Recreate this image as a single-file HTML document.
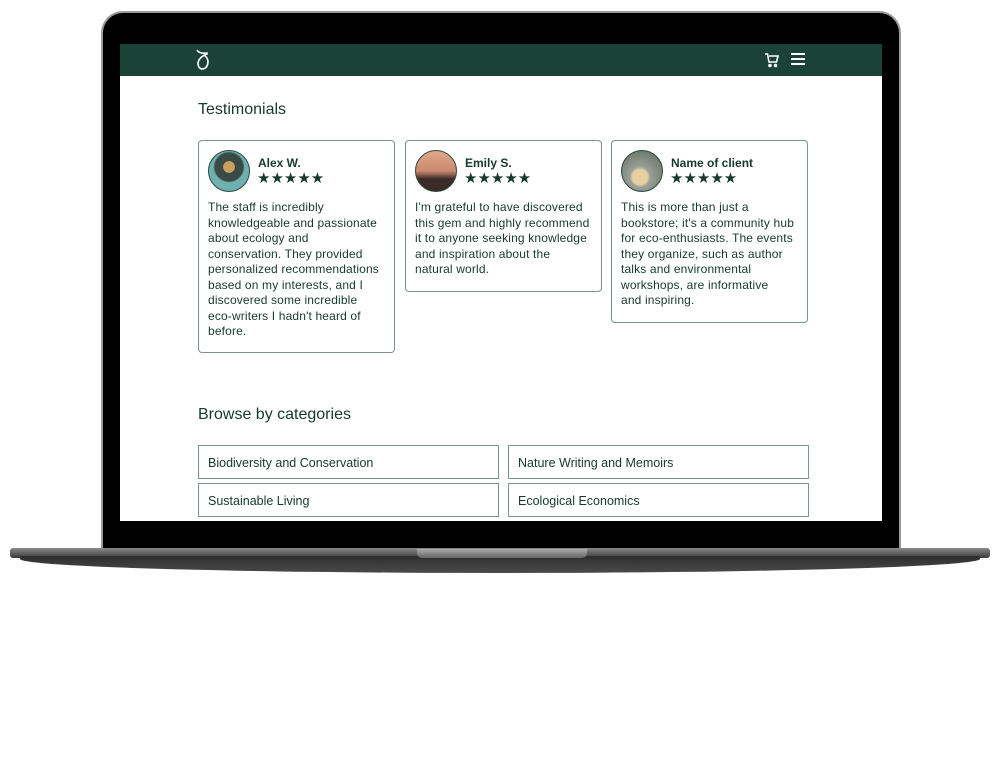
<!DOCTYPE html>
<html><head><meta charset="utf-8"><style>
*{margin:0;padding:0;box-sizing:border-box}
body{width:1000px;height:778px;background:#fff;position:relative;overflow:hidden;font-family:"Liberation Sans",sans-serif;color:#17392c}
.frame{position:absolute;left:101px;top:11px;width:800px;height:545px;background:#000;border-radius:22px 22px 0 0;border:2px solid #9a9a9a;border-bottom:none}
.screen{position:absolute;left:120px;top:44px;width:762px;height:477px;background:#fff;overflow:hidden}
.nav{position:absolute;left:0;top:0;width:762px;height:32px;background:#1b4237}
.base{position:absolute;left:10px;top:548px;width:980px;height:10px;background:linear-gradient(#8a8a8a,#3a3a3a);border-radius:3px}
.base2{position:absolute;left:20px;top:556px;width:960px;height:17px;background:linear-gradient(#2e2e2e,#4a4a4a);border-radius:0 0 60% 60%/0 0 100% 100%}
.notch{position:absolute;left:417px;top:549px;width:170px;height:9px;background:linear-gradient(#aaa,#666);border-radius:0 0 5px 5px}
h2{position:absolute;font-weight:normal;font-size:16px;color:#17392c}
.card{position:absolute;top:96px;width:197px;border:1px solid #7a948a;border-radius:4px;padding:9px 9px 10px 9px}
.av{position:absolute;left:9px;top:9px;width:42px;height:42px;border-radius:50%;border:1px solid #2a4a3e}
.nm{position:absolute;left:59px;top:15px;font-weight:bold;font-size:12px}
.st{position:absolute;left:58px;top:28px;font-size:15px;letter-spacing:0;color:#17392c}
.tx{margin-top:50px;font-size:12px;line-height:15.5px;letter-spacing:.15px;white-space:nowrap}
.cat{position:absolute;width:301px;height:34px;border:1px solid #7a948a;font-size:12.5px;padding:10px 9px}
</style></head><body>
<div class="frame"></div>
<div class="base"></div><div class="base2"></div><div class="notch"></div>
<div class="screen">
 <div class="nav">
  <svg style="position:absolute;left:74px;top:4px" width="18" height="24" viewBox="0 0 18 24" fill="none" stroke="#fff" stroke-width="1.6"><path d="M3 2 Q5 6 13 5 L13 6 Q5 9 4 15 Q4 21 9 21 Q14 20 14 13 Q13 8 9 7"/></svg>
  <svg style="position:absolute;left:644px;top:8px" width="16" height="16" viewBox="0 0 16 16" fill="none" stroke="#fff" stroke-width="1.6"><path d="M1 2h2.5l1.5 8h7.5l1.5-6H5"/><circle cx="6" cy="13.5" r="1" fill="#fff"/><circle cx="11.5" cy="13.5" r="1" fill="#fff"/></svg>
  <svg style="position:absolute;left:670px;top:8px" width="16" height="14" viewBox="0 0 16 14" stroke="#fff" stroke-width="2"><path d="M1 2h14M1 7h14M1 12h14"/></svg>
 </div>
 <h2 style="left:78px;top:57px">Testimonials</h2>
 <div class="card" style="left:78px;height:213px">
  <div class="av" style="background:radial-gradient(circle at 50% 40%,#c9a060 0 18%,#3a4a45 20% 45%,#6fb0b0 50%)"></div>
  <div class="nm">Alex W.</div><div class="st">★★★★★</div>
  <div class="tx">The staff is incredibly<br>knowledgeable and passionate<br>about ecology and<br>conservation. They provided<br>personalized recommendations<br>based on my interests, and I<br>discovered some incredible<br>eco-writers I hadn't heard of<br>before.</div>
 </div>
 <div class="card" style="left:285px;height:152px">
  <div class="av" style="background:linear-gradient(#e0a888,#c98a70 50%,#3a2a28 70%)"></div>
  <div class="nm">Emily S.</div><div class="st">★★★★★</div>
  <div class="tx">I'm grateful to have discovered<br>this gem and highly recommend<br>it to anyone seeking knowledge<br>and inspiration about the<br>natural world.</div>
 </div>
 <div class="card" style="left:491px;height:183px">
  <div class="av" style="background:radial-gradient(circle at 45% 65%,#e8d0a0 0 22%,#9aa098 30%,#5a6658)"></div>
  <div class="nm">Name of client</div><div class="st">★★★★★</div>
  <div class="tx">This is more than just a<br>bookstore; it's a community hub<br>for eco-enthusiasts. The events<br>they organize, such as author<br>talks and environmental<br>workshops, are informative<br>and inspiring.</div>
 </div>
 <h2 style="left:78px;top:362px">Browse by categories</h2>
 <div class="cat" style="left:78px;top:401px">Biodiversity and Conservation</div>
 <div class="cat" style="left:388px;top:401px">Nature Writing and Memoirs</div>
 <div class="cat" style="left:78px;top:439px">Sustainable Living</div>
 <div class="cat" style="left:388px;top:439px">Ecological Economics</div>
 <div class="cat" style="left:78px;top:477px"></div>
 <div class="cat" style="left:388px;top:477px"></div>
</div>
</body></html>
